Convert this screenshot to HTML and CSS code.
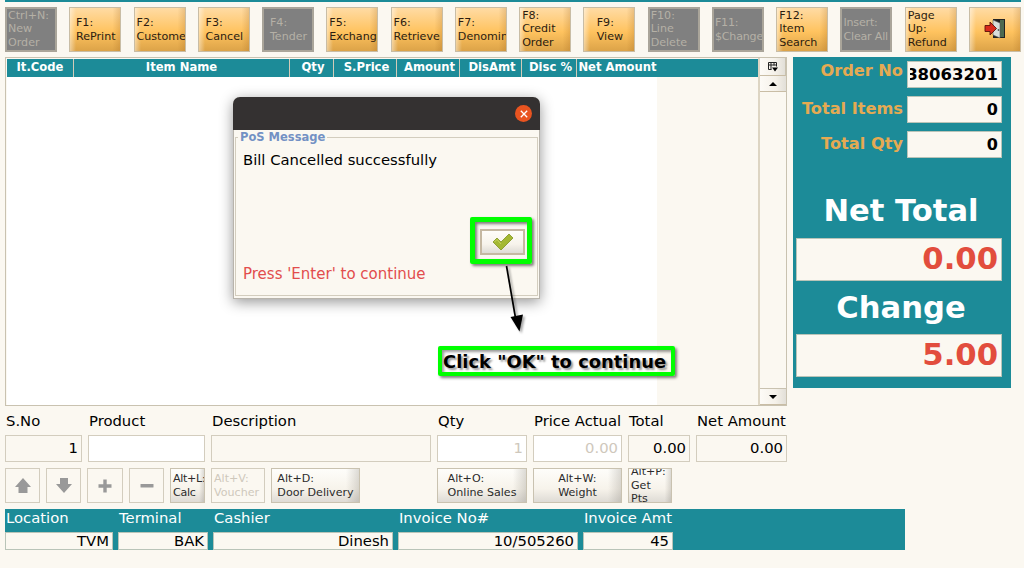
FILE: index.html
```html
<!DOCTYPE html>
<html lang="en">
<head>
  <meta charset="UTF-8">
  <meta name="viewport" content="width=device-width, initial-scale=1.0">
  <title>Point of Sale</title>
  <link rel="stylesheet" href="styles.css">
</head>
<body>
  <div class="toolbar">
    <button class="tool disabled three">Ctrl+N:<br>New<br>Order</button>
    <button class="tool"><span>F1:<br>RePrint</span></button>
    <button class="tool wide"><span>F2:<br>Customer</span></button>
    <button class="tool"><span>F3:<br>Cancel</span></button>
    <button class="tool disabled"><span>F4:<br>Tender</span></button>
    <button class="tool wide"><span>F5:<br>Exchang</span></button>
    <button class="tool wide"><span>F6:<br>Retrieve</span></button>
    <button class="tool wide"><span>F7:<br>Denomin</span></button>
    <button class="tool three">F8:<br>Credit<br>Order</button>
    <button class="tool"><span>F9:<br>View</span></button>
    <button class="tool disabled three">F10:<br>Line<br>Delete</button>
    <button class="tool disabled wide"><span>F11:<br>$Change</span></button>
    <button class="tool three">F12:<br>Item<br>Search</button>
    <button class="tool disabled wide"><span>Insert:<br>Clear All</span></button>
    <button class="tool three">Page<br>Up:<br>Refund</button>
    <button class="tool">
      <svg class="exit" width="22" height="22" viewBox="0 0 22 22">
        <path d="M9 1h12v19H9z" fill="#222"/>
        <path d="M16 2h4v17h-4z" fill="#4d6a50"/>
        <path d="M9 2l7 3v15l-7-3z" fill="#d8dcda" stroke="#555" stroke-width=".6"/>
        <circle cx="14.5" cy="12" r=".9" fill="#555"/>
        <path d="M1 7.500h5V4l6.500 6.500L6 17v-3.500H1z" fill="#d8291c" stroke="#5f1009" stroke-width=".9"/>
      </svg>
    </button>
  </div>

  <div class="main">
    <div class="items">
      <div class="grid">
        <div class="columns">
          <div>It.Code</div>
          <div>Item Name</div>
          <div>Qty</div>
          <div>S.Price</div>
          <div>Amount</div>
          <div>DisAmt</div>
          <div>Disc %</div>
          <div>Net Amount</div>
        </div>
        <div class="rows"></div>
      </div>
      <div class="scrollbar">
        <div class="picker">
          <svg width="12" height="12" viewBox="0 0 12 12">
            <path d="M1.500 8.500V1.500h8v4M1.500 4h8M4 1.500v7M7 1.500v3M1.500 8.500h3" fill="none" stroke="#222"/>
            <path d="M5 6.500h6L8 10.500z" fill="#000"/>
          </svg>
        </div>
        <div class="scroll-btn"><svg width="8" height="4"><path d="M0 4L4 0l4 4z"/></svg></div>
        <div class="track"></div>
        <div class="scroll-btn"><svg width="8" height="4"><path d="M0 0h8L4 4z"/></svg></div>
      </div>
    </div>

    <div class="summary">
      <div class="count"><label>Order No</label><div class="box clip"><span>38063201</span></div></div>
      <div class="count"><label>Total Items</label><div class="box">0</div></div>
      <div class="count"><label>Total Qty</label><div class="box">0</div></div>
      <div class="heading">Net Total</div>
      <div class="amount">0.00</div>
      <div class="heading">Change</div>
      <div class="amount">5.00</div>
    </div>
  </div>

  <div class="entry">
    <div class="field"><label>S.No</label><div class="value">1</div></div>
    <div class="field"><label>Product</label><div class="value white"></div></div>
    <div class="field"><label>Description</label><div class="value"></div></div>
    <div class="field"><label>Qty</label><div class="value white">1</div></div>
    <div class="field"><label>Price Actual</label><div class="value white">0.00</div></div>
    <div class="field"><label>Total</label><div class="value">0.00</div></div>
    <div class="field"><label>Net Amount</label><div class="value">0.00</div></div>
  </div>

  <div class="actions">
    <button class="flat">
      <svg width="18" height="18" viewBox="0 0 18 18"><path d="M9 1l8 9h-3.500v6h-9v-6H1z" fill="#999"/></svg>
    </button>
    <button class="flat">
      <svg width="18" height="18" viewBox="0 0 18 18"><path d="M5 1h8v6h4l-8 9-8-9h4z" fill="#999"/></svg>
    </button>
    <button class="flat">
      <svg width="14" height="14" viewBox="0 0 14 14"><path d="M5.300.5h3.400v4.800h4.800v3.400H8.700v4.800H5.300V8.700H.5V5.300h4.800z" fill="#999"/></svg>
    </button>
    <button class="flat">
      <svg width="14" height="14" viewBox="0 0 14 14"><rect x=".5" y="5" width="13" height="3.500" rx=".5" fill="#999"/></svg>
    </button>
    <button class="left calc"><span>Alt+L:<br>Calc</span></button>
    <button class="flat left"><span>Alt+V:<br>Voucher</span></button>
    <button><span>Alt+D:<br>Door Delivery</span></button>
    <button class="online"><span>Alt+O:<br>Online Sales</span></button>
    <button><span>Alt+W:<br>Weight</span></button>
    <button class="left"><span>Alt+P:<br>Get<br>Pts</span></button>
  </div>

  <div class="status">
    <div class="info"><label>Location</label><div>TVM</div></div>
    <div class="info"><label>Terminal</label><div>BAK</div></div>
    <div class="info"><label>Cashier</label><div>Dinesh</div></div>
    <div class="info"><label>Invoice No#</label><div>10/505260</div></div>
    <div class="info"><label>Invoice Amt</label><div>45</div></div>
  </div>

  <div class="dialog">
    <div class="titlebar">
      <div class="close">
        <svg width="8" height="8" viewBox="0 0 8 8"><path d="M.8.8l6.400 6.400M7.200.8L.8 7.200" stroke="#fff" stroke-width="1.300"/></svg>
      </div>
    </div>
    <fieldset class="message">
      <legend>PoS Message</legend>
      <p>Bill Cancelled successfully</p>
      <button class="ok">
        <svg width="22" height="18" viewBox="0 0 22 18">
          <path d="M1 9l4-4 4 4 8-8 4 4L9 17z" fill="#a4b833" stroke="#7f9420" stroke-width=".8"/>
          <path d="M2.500 9L5 6.500l4 4.500" fill="none" stroke="#c5d45b"/>
        </svg>
      </button>
      <p class="prompt">Press 'Enter' to continue</p>
    </fieldset>
  </div>

  <div class="highlight"></div>
  <svg class="arrow" width="30" height="72" viewBox="0 0 30 72">
    <path d="M6.500 3l9 52" stroke="#000" stroke-width="1.700"/>
    <path d="M10.500 54l12.500-2.500-3.500 17z"/>
  </svg>
  <div class="callout">Click "OK" to continue</div>
</body>
</html>
```

FILE: styles.css
```css
* {
  box-sizing: border-box;
}

body {
  margin: 0;
  padding: 0 3px 0 5px;
  width: 1024px;
  height: 568px;
  overflow: hidden;
  position: relative;
  background: #fbf8f1;
  color: #000;
  font-family: "DejaVu Sans", sans-serif;
  font-size: 14.8px;
}

button {
  display: flex;
  align-items: center;
  justify-content: center;
  margin: 0;
  padding: 0;
  overflow: hidden;
  font-family: inherit;
  font-size: 11.1px;
  line-height: 13.5px;
  text-align: left;
  white-space: nowrap;
  color: #2b2b2b;
}

svg {
  display: block;
  flex-shrink: 0;
}

.toolbar {
  display: flex;
  justify-content: space-between;
  height: 57px;
  padding-top: 4px;
  border-top: 2px solid #1c8b98;
}

.tool {
  width: 52px;
  height: 45px;
  margin-top: 1px;
  padding-left: 1px;
  border: 1px solid #c9bda5;
  color: #2c1c10;
  background: linear-gradient(to right, rgba(255, 255, 255, 0.45), transparent 12%, transparent 85%, rgba(150, 90, 20, 0.2)),
    linear-gradient(#ffdba4, #ffc35f 55%, #dca348);
}

.tool.disabled {
  background: #808080;
  border: 2px solid #aaa59a;
  color: #b5b0a6;
}

.tool.three,
.tool.wide {
  justify-content: flex-start;
  padding-left: 2px;
}

.tool.three {
  padding-bottom: 1px;
}

.tool.disabled.three,
.tool.disabled.wide {
  padding-left: 1px;
}

.tool.disabled.wide {
  letter-spacing: -0.2px;
}

.exit {
  margin-bottom: 2px;
}

.main {
  display: flex;
  align-items: flex-start;
  gap: 6px;
  height: 354px;
}

.items {
  display: flex;
  width: 782px;
  height: 349px;
  border: 1px solid #c9c2b0;
}

.grid {
  flex: 1;
  padding: 1px 0 0 1px;
}

.columns {
  display: grid;
  grid-template-columns: 67px 216px 44px 63px 63px 62px 55px 81px 1fr;
  height: 18px;
  background: #1c8b98;
  color: #fff;
  font-size: 11.6px;
  font-weight: bold;
  line-height: 17px;
  text-align: center;
}

.columns div {
  border-right: 1px solid #d3cbb8;
  white-space: nowrap;
}

.columns div:nth-child(n + 3) {
  padding-left: 3px;
}

.columns div:last-child {
  padding-left: 0;
  border-right: none;
}

.rows {
  width: 650px;
  height: 328px;
  background: #fff;
}

.scrollbar {
  display: flex;
  flex-direction: column;
  width: 28px;
  border-left: 2px solid #ddd5c3;
}

.picker,
.scroll-btn {
  display: flex;
  align-items: center;
  justify-content: center;
  height: 16px;
  border-bottom: 1px solid #c9bda5;
  background: linear-gradient(to right, #fdfbf7, #f5f1e9 60%, #e2dfd8);
}

.picker {
  height: 18px;
  border-right: 1px solid #c9c2b0;
}

.track {
  flex: 1;
  border-bottom: 1px solid #c9c2b0;
}

.summary {
  width: 218px;
  height: 331px;
  padding: 4px 9px 0 3px;
  background: #1c8b98;
}

.count {
  display: flex;
  justify-content: flex-end;
  gap: 4px;
  height: 35px;
}

.count label {
  margin-top: 3px;
  line-height: 20px;
  color: #e5aa52;
  font-size: 16.2px;
  font-weight: bold;
}

.count:first-child label {
  margin-top: 0;
}

.box {
  width: 95px;
  height: 27px;
  padding: 0 3px;
  border: 1px solid #b9c4b8;
  background: #fbf8f1;
  font-size: 16px;
  font-weight: bold;
  line-height: 25px;
  text-align: right;
}

.box.clip {
  padding: 0 3px 0 2px;
}

.clip span {
  display: flex;
  justify-content: flex-end;
  overflow: hidden;
  font-size: 16.5px;
}

.heading {
  height: 53px;
  padding-left: 4px;
  line-height: 53px;
  text-align: center;
  color: #fff;
  font-size: 30.6px;
  font-weight: bold;
}

.count + .heading {
  height: 72px;
  padding-top: 18px;
}

.amount {
  height: 43px;
  padding: 0 3px;
  border: 1px solid #b9c4b8;
  background: #fbf8f1;
  color: #e24d3d;
  font-size: 30.7px;
  font-weight: bold;
  line-height: 39px;
  text-align: right;
}

.entry {
  display: grid;
  grid-template-columns: 77px 117px 220px 90px 89px 62px 91px;
  gap: 6px;
  height: 57px;
}

.field {
  white-space: nowrap;
}

.field label {
  display: block;
  height: 24px;
  padding-left: 1px;
  line-height: 19px;
}

.value {
  height: 27px;
  padding: 0 3px;
  border: 1px solid #d3cdbe;
  line-height: 24px;
  text-align: right;
}

.value.white {
  background: #fff;
  color: #cfc8bc;
}

.actions {
  display: grid;
  grid-template-columns: 35px 35px 36px 35px 35px 54px 89px 65px 90px 89px 44px;
  gap: 6px;
  height: 41px;
}

.actions button {
  height: 35px;
  border: 1px solid #c9c2b0;
  background: linear-gradient(to right, transparent 85%, rgba(120, 115, 105, 0.25)),
    linear-gradient(#fefdfa, #f7f3eb 60%, #dedbd5);
}

.actions .flat {
  border-color: #d3cdbe;
  background: none;
  color: #cfc8bc;
}

.actions .left {
  justify-content: flex-start;
  padding-left: 2px;
}

.actions .calc {
  letter-spacing: -0.3px;
}

.actions .online {
  grid-column: 9;
}

.status {
  display: grid;
  grid-template-columns: 108px 90px 180px 180px 90px;
  gap: 5px;
  width: 900px;
  height: 41px;
  background: #1c8b98;
}

.info label {
  display: block;
  height: 23px;
  padding-left: 1px;
  line-height: 18px;
  color: #fff;
}

.info div {
  height: 18px;
  padding: 0 3px;
  border: 1px solid #b9c4b8;
  background: #fbf8f1;
  line-height: 16px;
  text-align: right;
}

/* message window, floats above the item grid */
.dialog {
  position: absolute;
  left: 233px;
  top: 97px;
  width: 307px;
  height: 202px;
  border: 1px solid #b8b4ac;
  border-top: none;
  border-radius: 7px 7px 0 0;
  background: #fbf8f1;
  box-shadow: 0 3px 14px rgba(0, 0, 0, 0.42);
}

.titlebar {
  display: flex;
  align-items: center;
  justify-content: flex-end;
  height: 33px;
  margin: 0 -1px;
  padding-right: 8px;
  border-radius: 7px 7px 0 0;
  background: #343131;
}

.close {
  display: flex;
  align-items: center;
  justify-content: center;
  width: 17px;
  height: 17px;
  border-radius: 50%;
  background: #e95420;
}

.message {
  display: flex;
  flex-direction: column;
  height: 166px;
  margin: 0 1px;
  padding: 0 7px;
  border: 1px solid #d3cdbe;
}

.message legend {
  margin-left: -5px;
  padding: 0 2px;
  color: #7391c4;
  font-size: 11.5px;
  line-height: 14px;
  font-weight: bold;
}

.message p {
  margin: 6px 0 0;
  line-height: 20px;
}

.ok {
  align-self: flex-end;
  width: 45px;
  height: 26px;
  margin: 59px 5px 0 0;
  border: 2px solid #c5b8a2;
  background: linear-gradient(#fefdfa, #f7f3eb 60%, #dedbd5);
}

.message .prompt {
  margin-top: 9px;
  color: #e24d4d;
  font-size: 15px;
}

/* tutorial markers */
.highlight {
  position: absolute;
  left: 470px;
  top: 217px;
  width: 62px;
  height: 47px;
  border: 5px solid #0f0;
  border-radius: 2px;
  box-shadow: 2px 2px 3px rgba(0, 0, 0, 0.5), inset 2px 2px 3px rgba(0, 0, 0, 0.5);
}

.arrow {
  position: absolute;
  left: 500px;
  top: 263px;
  filter: drop-shadow(2px 2px 1px rgba(0, 0, 0, 0.35));
}

.callout {
  position: absolute;
  left: 438px;
  top: 346px;
  width: 237px;
  height: 30px;
  padding-left: 1px;
  border: 4px solid #0f0;
  border-radius: 2px;
  box-shadow: 2px 2px 3px rgba(0, 0, 0, 0.5), inset 2px 2px 3px rgba(0, 0, 0, 0.4);
  color: #000;
  font-size: 17.9px;
  font-weight: bold;
  line-height: 23px;
  white-space: nowrap;
  text-shadow: 2px 2px 2px rgba(0, 0, 0, 0.4);
}
```
